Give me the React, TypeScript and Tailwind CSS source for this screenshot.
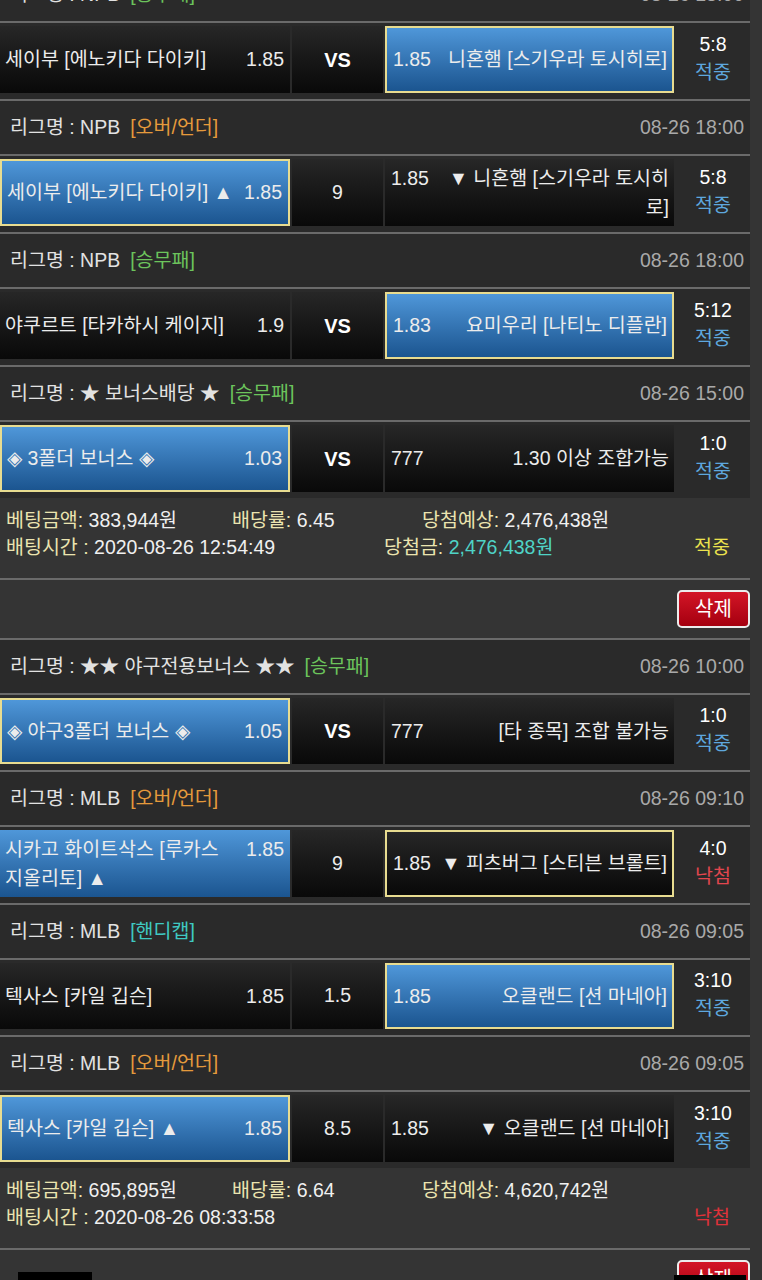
import React from "react";

type Side = {
  name: string[];
  odds: string;
  blue?: boolean;
  pick?: boolean;
};

type Game = {
  league: string;
  type: "승무패" | "오버/언더" | "핸디캡";
  date: string;
  home: Side;
  mid: string;
  away: Side;
  score: string;
  result: "적중" | "낙첨";
};

const typeColor: Record<string, string> = {
  승무패: "text-[#6cc45c]",
  "오버/언더": "text-[#e59a3c]",
  핸디캡: "text-[#3fc9c2]",
};

const Line = () => <div className="h-[2px] w-[750px] bg-[#6a6a6a]" />;

const Header = ({ g, first }: { g: Game; first?: boolean }) => (
  <div
    className={`flex h-[53px] w-[750px] items-center justify-between bg-[#2a2a2a] pl-[10px] pr-[6px] ${
      first ? "-mt-[32px]" : ""
    }`}
  >
    <div className="text-[#e2e2e2]">
      리그명 : {g.league}
      <span className={`ml-[10px] ${typeColor[g.type]}`}>[{g.type}]</span>
    </div>
    <div className="text-[#a9a9a9]">{g.date}</div>
  </div>
);

const cellBg = (s: Side) =>
  s.blue
    ? "bg-linear-to-b from-[#4f97d9] to-[#1b5590]"
    : "bg-linear-to-b from-[#272727] to-[#090909]";

const HomeCell = ({ s }: { s: Side }) => (
  <div
    className={`flex w-[290px] items-center ${cellBg(s)} ${
      s.pick ? "border-2 border-[#e8dc90]" : ""
    } pl-[5px] pr-[6px]`}
  >
    <div className="flex w-full items-start justify-between leading-[29px]">
      <div className="whitespace-nowrap">
        {s.name.map((n, i) => (
          <div key={i}>{n}</div>
        ))}
      </div>
      <div>{s.odds}</div>
    </div>
  </div>
);

const AwayCell = ({ s }: { s: Side }) => (
  <div
    className={`flex w-[289px] items-center ${cellBg(s)} ${
      s.pick ? "border-2 border-[#e8dc90]" : ""
    } pl-[6px] pr-[5px]`}
  >
    <div className="flex w-full items-start justify-between leading-[29px]">
      <div>{s.odds}</div>
      <div className="whitespace-nowrap text-right">
        {s.name.map((n, i) => (
          <div key={i}>{n}</div>
        ))}
      </div>
    </div>
  </div>
);

const GameRow = ({ g, short }: { g: Game; short?: boolean }) => (
  <div
    className={`flex ${
      short ? "h-[75px]" : "h-[76px]"
    } w-[750px] gap-[2px] bg-[#2a2a2a] pt-[3px] pb-[6px] text-[#ececec]`}
  >
    <HomeCell s={g.home} />
    <div
      className={`flex w-[91px] items-center justify-center bg-linear-to-b from-[#272727] to-[#090909] ${
        g.mid === "VS" ? "text-[20px] font-bold text-white" : ""
      }`}
    >
      {g.mid}
    </div>
    <AwayCell s={g.away} />
    <div className="flex flex-1 flex-col items-center justify-center pb-[4px] leading-[28px]">
      <div className="text-white">{g.score}</div>
      <div className={g.result === "적중" ? "text-[#5ea7de]" : "text-[#e2464e]"}>
        {g.result}
      </div>
    </div>
  </div>
);

const Lbl = ({ children }: { children: React.ReactNode }) => (
  <span className="text-[#ebe4b0]">{children}</span>
);

const BetInfo = ({
  amount,
  rate,
  expect,
  time,
  won,
  result,
}: {
  amount: string;
  rate: string;
  expect: string;
  time: string;
  won?: string;
  result: "적중" | "낙첨";
}) => (
  <div className="flex h-[80px] w-[750px] flex-col pt-[9px] leading-[27px] text-[#f0f0f0]">
    <div className="flex">
      <div className="w-[232px] pl-[6px]">
        <Lbl>베팅금액:</Lbl> {amount}
      </div>
      <div className="w-[190px]">
        <Lbl>배당률:</Lbl> {rate}
      </div>
      <div>
        <Lbl>당첨예상:</Lbl> {expect}
      </div>
    </div>
    <div className="flex">
      <div className="w-[384px] pl-[6px]">
        <Lbl>배팅시간 :</Lbl> {time}
      </div>
      <div className="flex-1">
        {won && (
          <>
            <Lbl>당첨금:</Lbl> <span className="text-[#4fd3c6]">{won}</span>
          </>
        )}
      </div>
      <div
        className={`w-[76px] text-center ${
          result === "적중" ? "text-[#ece24e]" : "text-[#e0323a]"
        }`}
      >
        {result}
      </div>
    </div>
  </div>
);

const DeleteRow = () => (
  <div className="flex h-[58px] w-[750px] items-start justify-end pt-[10px]">
    <button className="flex h-[38px] w-[73px] items-center justify-center rounded-[5px] border-2 border-[#ececec] bg-linear-to-b from-[#d31526] to-[#a5000f] text-[20px] text-white">
      삭제
    </button>
  </div>
);

const games: Game[] = [
  {
    league: "NPB",
    type: "승무패",
    date: "08-26 18:00",
    home: { name: ["세이부 [에노키다 다이키]"], odds: "1.85" },
    mid: "VS",
    away: { name: ["니혼햄 [스기우라 토시히로]"], odds: "1.85", blue: true, pick: true },
    score: "5:8",
    result: "적중",
  },
  {
    league: "NPB",
    type: "오버/언더",
    date: "08-26 18:00",
    home: { name: ["세이부 [에노키다 다이키] ▲"], odds: "1.85", blue: true, pick: true },
    mid: "9",
    away: { name: ["▼ 니혼햄 [스기우라 토시히", "로]"], odds: "1.85" },
    score: "5:8",
    result: "적중",
  },
  {
    league: "NPB",
    type: "승무패",
    date: "08-26 18:00",
    home: { name: ["야쿠르트 [타카하시 케이지]"], odds: "1.9" },
    mid: "VS",
    away: { name: ["요미우리 [나티노 디플란]"], odds: "1.83", blue: true, pick: true },
    score: "5:12",
    result: "적중",
  },
  {
    league: "★ 보너스배당 ★",
    type: "승무패",
    date: "08-26 15:00",
    home: { name: ["◈ 3폴더 보너스 ◈"], odds: "1.03", blue: true, pick: true },
    mid: "VS",
    away: { name: ["1.30 이상 조합가능"], odds: "777" },
    score: "1:0",
    result: "적중",
  },
  {
    league: "★★ 야구전용보너스 ★★",
    type: "승무패",
    date: "08-26 10:00",
    home: { name: ["◈ 야구3폴더 보너스 ◈"], odds: "1.05", blue: true, pick: true },
    mid: "VS",
    away: { name: ["[타 종목] 조합 불가능"], odds: "777" },
    score: "1:0",
    result: "적중",
  },
  {
    league: "MLB",
    type: "오버/언더",
    date: "08-26 09:10",
    home: { name: ["시카고 화이트삭스 [루카스", "지올리토] ▲"], odds: "1.85", blue: true },
    mid: "9",
    away: { name: ["▼ 피츠버그 [스티븐 브롤트]"], odds: "1.85", pick: true },
    score: "4:0",
    result: "낙첨",
  },
  {
    league: "MLB",
    type: "핸디캡",
    date: "08-26 09:05",
    home: { name: ["텍사스 [카일 깁슨]"], odds: "1.85" },
    mid: "1.5",
    away: { name: ["오클랜드 [션 마네아]"], odds: "1.85", blue: true, pick: true },
    score: "3:10",
    result: "적중",
  },
  {
    league: "MLB",
    type: "오버/언더",
    date: "08-26 09:05",
    home: { name: ["텍사스 [카일 깁슨] ▲"], odds: "1.85", blue: true, pick: true },
    mid: "8.5",
    away: { name: ["▼ 오클랜드 [션 마네아]"], odds: "1.85" },
    score: "3:10",
    result: "적중",
  },
];

const Block = ({ g, first, short }: { g: Game; first?: boolean; short?: boolean }) => (
  <>
    <Header g={g} first={first} />
    <Line />
    <GameRow g={g} short={short} />
  </>
);

export default function App() {
  return (
    <div
      className="relative h-[1280px] w-[762px] overflow-hidden bg-[#343434] text-[19.5px]"
      style={{ fontFamily: '"Liberation Sans", "Noto Sans CJK KR", sans-serif' }}
    >
      {/* first slip */}
      <Block g={games[0]} first />
      <Line />
      <Block g={games[1]} />
      <Line />
      <Block g={games[2]} />
      <Line />
      <Block g={games[3]} />
      <BetInfo
        amount="383,944원"
        rate="6.45"
        expect="2,476,438원"
        time="2020-08-26 12:54:49"
        won="2,476,438원"
        result="적중"
      />
      <Line />
      <DeleteRow />
      <Line />

      {/* second slip */}
      <Block g={games[4]} short />
      <Line />
      <Block g={games[5]} />
      <Line />
      <Block g={games[6]} short />
      <Line />
      <Block g={games[7]} />
      <BetInfo
        amount="695,895원"
        rate="6.64"
        expect="4,620,742원"
        time="2020-08-26 08:33:58"
        result="낙첨"
      />
      <Line />
      <DeleteRow />

      {/* bottom floating bar edges */}
      <div className="absolute left-[18px] top-[1272px] h-[10px] w-[74px] bg-black" />
      <div className="absolute left-[674px] top-[1275px] h-[10px] w-[72px] bg-black" />
    </div>
  );
}
